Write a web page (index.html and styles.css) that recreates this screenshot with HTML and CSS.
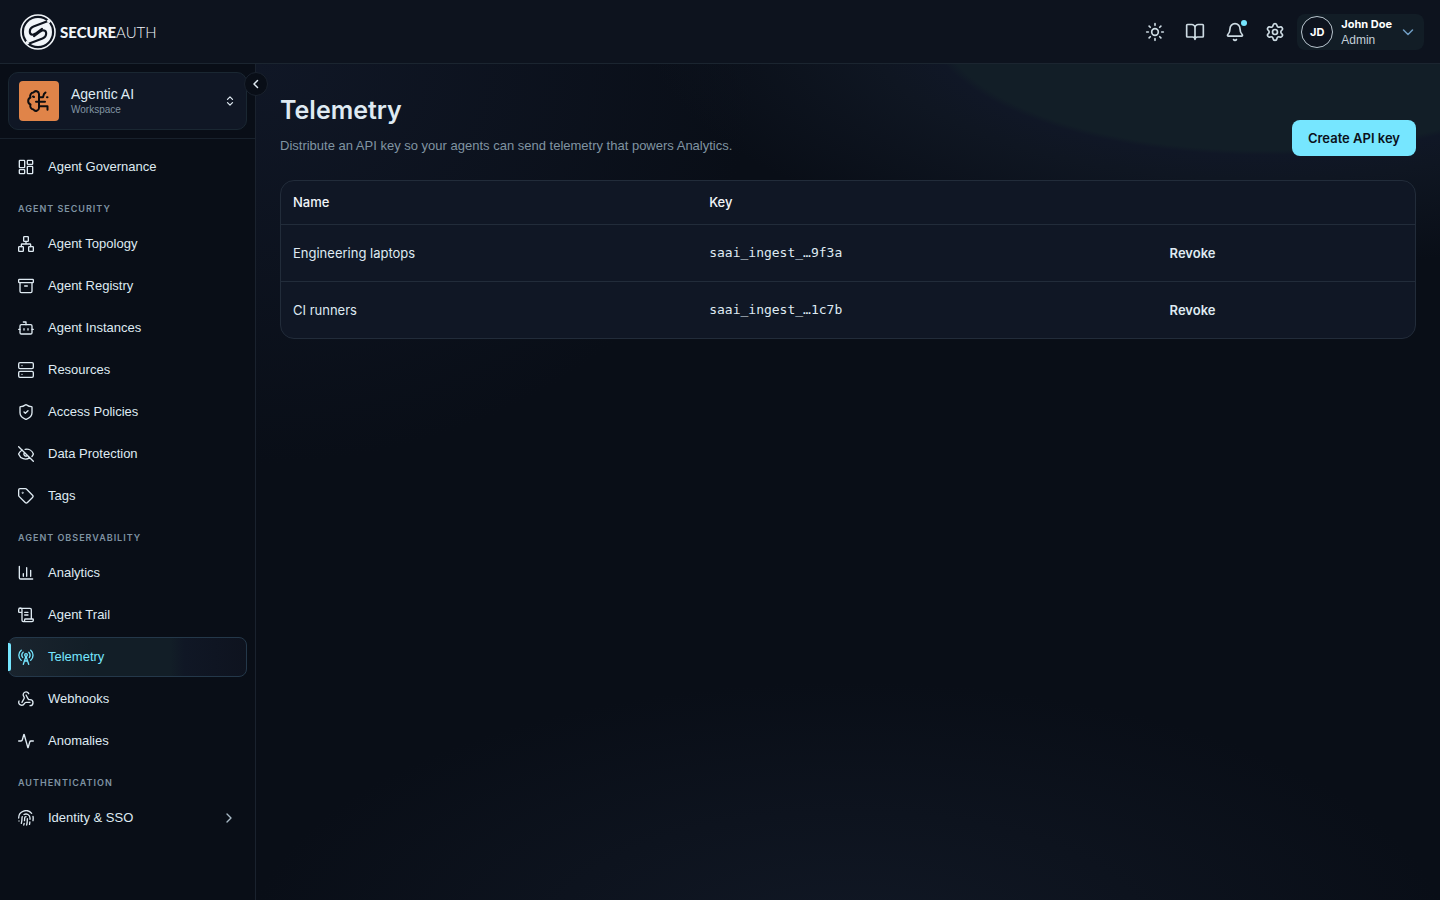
FILE: index.html
```html
<!DOCTYPE html>
<html lang="en">
<head>
<meta charset="utf-8">
<title>Telemetry - SecureAuth</title>
<link rel="stylesheet" href="styles.css">
</head>
<body>
<header class="topbar">
  <a class="brand" href="#">
    <svg class="brand-mark" viewBox="0 0 36 36" aria-hidden="true">
      <circle cx="18" cy="18" r="17" fill="none" stroke="#f1f5f9" stroke-width="1.6"/>
      <circle cx="18" cy="18" r="14" fill="#f1f5f9"/>
      <g fill="none" stroke="#0d131e" stroke-width="2.1" stroke-linecap="round" stroke-linejoin="round">
        <path d="M28 7 13.500 12.500C8.500 14.500 9 20.500 12.500 20.800c1.500 0 2.500-.800 3.500-1.500l6-4.500"/>
        <path d="M8 29l14.500-5.500C27.500 21.500 27 15.500 23.500 15.200c-1.500 0-2.500.800-3.500 1.500l-6 4.500" transform="translate(0 1)"/>
      </g>
      <path d="M27.500 6l2.500 2.500M6 27.500l2.500 2.500" stroke="#f1f5f9" stroke-width="2.500"/>
    </svg>
    <span class="brand-name"><b>SECURE</b>AUTH</span>
  </a>
  <div class="tools">
    <button class="tool" aria-label="Theme"><svg class="icon md" viewBox="0 0 24 24"><circle cx="12" cy="12" r="4"/><path d="M12 2v2M12 20v2M4.930 4.930l1.410 1.410M17.660 17.660l1.410 1.410M2 12h2M20 12h2M6.340 17.660l-1.410 1.410M19.070 4.930l-1.410 1.410"/></svg></button>
    <button class="tool" aria-label="Documentation"><svg class="icon md" viewBox="0 0 24 24"><path d="M12 7v14M3 18a1 1 0 0 1-1-1V4a1 1 0 0 1 1-1h5a4 4 0 0 1 4 4 4 4 0 0 1 4-4h5a1 1 0 0 1 1 1v13a1 1 0 0 1-1 1h-6a3 3 0 0 0-3 3 3 3 0 0 0-3-3z"/></svg></button>
    <button class="tool" aria-label="Notifications"><svg class="icon md" viewBox="0 0 24 24"><path d="M10.268 21a2 2 0 0 0 3.464 0M3.262 15.326A1 1 0 0 0 4 17h16a1 1 0 0 0 .740-1.673C19.410 13.956 18 12.499 18 8A6 6 0 0 0 6 8c0 4.499-1.411 5.956-2.738 7.326"/></svg><span class="dot"></span></button>
    <button class="tool" aria-label="Settings"><svg class="icon md" viewBox="0 0 24 24"><path d="M9.671 4.136a2.340 2.340 0 0 1 4.659 0 2.340 2.340 0 0 0 3.319 1.915 2.340 2.340 0 0 1 2.330 4.033 2.340 2.340 0 0 0 0 3.831 2.340 2.340 0 0 1-2.330 4.033 2.340 2.340 0 0 0-3.319 1.915 2.340 2.340 0 0 1-4.659 0 2.340 2.340 0 0 0-3.320-1.915 2.340 2.340 0 0 1-2.330-4.033 2.340 2.340 0 0 0 0-3.831A2.340 2.340 0 0 1 6.350 6.051a2.340 2.340 0 0 0 3.319-1.915"/><circle cx="12" cy="12" r="3"/></svg></button>
    <button class="user">
      <span class="avatar">JD</span>
      <span class="user-text"><b>John Doe</b><span>Admin</span></span>
      <svg class="icon sm user-chevron" viewBox="0 0 24 24"><path d="m3 8 9 9 9-9"/></svg>
    </button>
  </div>
</header>
<div class="shell">
  <aside class="sidebar">
    <button class="collapse" aria-label="Collapse sidebar"><svg class="icon sm" viewBox="0 0 24 24"><path d="m15 19-7-7 7-7"/></svg></button>
    <div class="workspace-wrap">
      <button class="workspace">
        <span class="workspace-tile"><svg class="brain" viewBox="0 0 24 24"><path d="M12 5a3 3 0 0 0-5.500-1.500A3.500 3.500 0 0 0 3.500 8.500a3.800 3.800 0 0 0 0 7A3.600 3.600 0 0 0 6.500 20.500 3 3 0 0 0 12 19zM12 8.300h4L17 5l1.500-1.500M20 8.300h.500M9 12.700h9M12 17.300h8.500v3.500M6 7.500l1 .5"/></svg></span>
        <span class="workspace-text"><span class="workspace-name">Agentic AI</span><span class="workspace-kind">Workspace</span></span>
        <svg class="icon xs" viewBox="0 0 24 24"><path d="m6 16 6 6 6-6M6 8l6-6 6 6"/></svg>
      </button>
    </div>
    <nav class="nav">
      <a class="item" href="#"><svg class="icon" viewBox="0 0 24 24"><rect width="8" height="11" x="2" y="2" rx="1"/><rect width="8" height="6" x="14" y="2" rx="1"/><rect width="8" height="11" x="14" y="11" rx="1"/><rect width="8" height="6" x="2" y="16" rx="1"/></svg>Agent Governance</a>
      <h2 class="group">Agent Security</h2>
      <a class="item" href="#"><svg class="icon" viewBox="0 0 24 24"><rect x="16" y="16" width="7" height="7" rx="1"/><rect x="1" y="16" width="7" height="7" rx="1"/><rect x="8.500" y="1" width="7" height="7" rx="1"/><path d="M5 16v-3a1 1 0 0 1 1-1h12a1 1 0 0 1 1 1v3M12 12V8"/></svg>Agent Topology</a>
      <a class="item" href="#"><svg class="icon" viewBox="0 0 24 24"><rect width="22" height="5" x="1" y="2" rx="1"/><path d="M3 7v13a2 2 0 0 0 2 2h14a2 2 0 0 0 2-2V7M10 12h4"/></svg>Agent Registry</a>
      <a class="item" href="#"><svg class="icon" viewBox="0 0 24 24"><path d="M12 7V3H8"/><rect width="18" height="14" x="3" y="7" rx="2"/><path d="M1 14h2M21 14h2M15 13v2M9 13v2"/></svg>Agent Instances</a>
      <a class="item" href="#"><svg class="icon" viewBox="0 0 24 24"><rect width="22" height="9" x="1" y="1" rx="2"/><rect width="22" height="9" x="1" y="14" rx="2"/><path d="M6 5.500h.010M6 18.500h.010"/></svg>Resources</a>
      <a class="item" href="#"><svg class="icon" viewBox="0 0 24 24"><path d="M21 13c0 5.500-3.800 8-8.660 9.950a1 1 0 0 1-.670-.010C6.800 21 3 18.500 3 13V5a1 1 0 0 1 1-1c2.500 0 5-1.200 7.240-2.720a1.170 1.170 0 0 1 1.520 0C15 2.800 17.500 4 20 4a1 1 0 0 1 1 1z"/><path d="m9 12 2 2 4-4"/></svg>Access Policies</a>
      <a class="item" href="#"><svg class="icon" viewBox="0 0 24 24"><path d="M10.733 5.076a10.744 10.744 0 0 1 12.205 6.575 1 1 0 0 1 0 .696 10.747 10.747 0 0 1-2 3.490M14.084 14.158a3 3 0 0 1-4.242-4.242M17.479 17.499a10.750 10.750 0 0 1-16.417-5.151 1 1 0 0 1 0-.696 10.750 10.750 0 0 1 5.446-5.643M1 1l22 22"/></svg>Data Protection</a>
      <a class="item" href="#"><svg class="icon" viewBox="0 0 24 24"><path d="M12.586 1.586A2 2 0 0 0 11.172 1H3a2 2 0 0 0-2 2v8.172a2 2 0 0 0 .586 1.414l9.204 9.204a2.426 2.426 0 0 0 3.420 0l7.580-7.580a2.426 2.426 0 0 0 0-3.420z"/><circle cx="7" cy="7" r=".5"/></svg>Tags</a>
      <h2 class="group">Agent Observability</h2>
      <a class="item" href="#"><svg class="icon" viewBox="0 0 24 24"><path d="M2 2v17a2 2 0 0 0 2 2h18M19 17V8M13 17V4M8 17v-4"/></svg>Analytics</a>
      <a class="item" href="#"><svg class="icon" viewBox="0 0 24 24"><path d="M15 12h-5M15 8h-5M20 17V4a2 2 0 0 0-2-2H3M8 22h13a2 2 0 0 0 2-2v-1a1 1 0 0 0-1-1H11a1 1 0 0 0-1 1v1a2 2 0 1 1-4 0V4a2 2 0 1 0-5 0v3a1 1 0 0 0 1 1h4"/></svg>Agent Trail</a>
      <a class="item active" href="#" aria-current="page"><svg class="icon" viewBox="0 0 24 24"><path d="M4.900 17.100C0 13 0 5.800 4.900 1.900M7.800 4.700a6.140 6.140 0 0 0-.800 8M16.200 4.800c2 2 2.260 5.500.800 8M19.100 1.900a10 10 0 0 1 0 15.100M9.500 18h5M8 23l4-12 4 12"/><circle cx="12" cy="9" r="2"/></svg>Telemetry</a>
      <a class="item" href="#"><svg class="icon" viewBox="0 0 24 24"><path d="M18 17h-6c-1.100 0-1.950.940-2.480 1.900A4.500 4.500 0 0 1 1 17c.010-.700.200-1.400.570-2"/><path d="m6 17 3.130-5.780c.530-.970.100-2.180-.500-3.100a4.300 4.300 0 1 1 7.500-4.060"/><path d="m12 6 3.130 5.730C15.660 12.700 16.900 13 18 13a4.500 4.500 0 0 1 0 9"/></svg>Webhooks</a>
      <a class="item" href="#"><svg class="icon" viewBox="0 0 24 24"><path d="M23 12h-3.480a2 2 0 0 0-1.930 1.460l-2.350 8.360a.250.250 0 0 1-.480 0L9.240 2.180a.250.250 0 0 0-.480 0l-2.350 8.360A2 2 0 0 1 4.490 12H1"/></svg>Anomalies</a>
      <h2 class="group">Authentication</h2>
      <a class="item" href="#"><svg class="icon" viewBox="0 0 24 24"><path d="M12 10a2 2 0 0 0-2 2c0 1.020-.100 2.510-.260 4M14 13.120c0 2.380 0 6.380-1 9.380M17.290 21.500c.120-.600.430-2.700.500-3.500M1 12a11 11 0 0 1 19.500-7M1.500 16.500h.010M22.500 16c.300-2 .300-5 0-6.500M5 20C5.500 18 6 15 6 12a6 6 0 0 1 .340-2M8.650 22.500c.210-.660.450-1.820.570-2.500M9 6.800a6 6 0 0 1 9 5.200v2"/></svg><span class="item-label">Identity &amp; SSO</span><svg class="icon more" viewBox="0 0 24 24"><path d="m9 18 6-6-6-6"/></svg></a>
    </nav>
  </aside>
  <main class="main">
    <div class="page-head">
      <div class="page-title">
        <h1>Telemetry</h1>
        <p>Distribute an API key so your agents can send telemetry that powers Analytics.</p>
      </div>
      <button class="primary">Create API key</button>
    </div>
    <div class="card">
      <table class="keys">
        <colgroup><col class="col-name"><col class="col-key"><col></colgroup>
        <thead><tr><th scope="col">Name</th><th scope="col">Key</th><td></td></tr></thead>
        <tbody>
          <tr><td>Engineering laptops</td><td class="mono">saai_ingest_…9f3a</td><td><button class="revoke">Revoke</button></td></tr>
          <tr><td>CI runners</td><td class="mono">saai_ingest_…1c7b</td><td><button class="revoke">Revoke</button></td></tr>
        </tbody>
      </table>
    </div>
  </main>
</div>
</body>
</html>
```
FILE: styles.css
```css
*, *::before, *::after { box-sizing: border-box; }
body {
  margin: 0;
  min-height: 100vh;
  display: flex;
  flex-direction: column;
  background: #090e17;
  color: #dfeaf2;
  font-family: Inter, "Liberation Sans", sans-serif;
  font-size: 13px;
  line-height: 20px;
}
button { font: inherit; color: inherit; background: none; border: 0; padding: 0; cursor: pointer; }
a { color: inherit; text-decoration: none; }
h1, h2, p { margin: 0; }
.icon {
  width: 16px;
  height: 16px;
  flex: none;
  fill: none;
  stroke: currentColor;
  stroke-width: 2;
  stroke-linecap: round;
  stroke-linejoin: round;
}
.icon.md { width: 20px; height: 20px; }
.icon.sm { width: 12px; height: 12px; stroke-width: 3; }
.icon.xs { width: 10px; height: 12px; stroke-width: 3; margin-right: 1px; }

.topbar {
  height: 64px;
  display: flex;
  align-items: center;
  justify-content: space-between;
  padding: 0 16px 0 20px;
  background: #0d131e;
  border-bottom: 1px solid #1b2530;
}
.brand { display: flex; align-items: center; gap: 4px; }
.brand-mark { width: 36px; height: 36px; }
.brand-name { font-family: Lato, sans-serif; font-size: 15px; font-weight: 300; color: #f1f5f9; }
.brand-name b { font-weight: 900; }
.tools { display: flex; align-items: center; }
.tool { position: relative; width: 40px; height: 40px; display: grid; place-items: center; color: #cddbe3; }
.dot {
  position: absolute;
  top: 8px;
  right: 8px;
  width: 6px;
  height: 6px;
  border-radius: 50%;
  background: #76e6ff;
}
.user {
  display: flex;
  align-items: center;
  gap: 8px;
  height: 36px;
  margin-left: 2px;
  padding: 0 10px 0 4px;
  border-radius: 8px;
  background: #121d26;
  text-align: left;
}
.avatar {
  width: 32px;
  height: 32px;
  display: grid;
  place-items: center;
  border: 1px solid #b9c6cf;
  border-radius: 50%;
  background: #0d131e;
  color: #fff;
  font-size: 11px;
  font-weight: 700;
}
.user-text {
  display: flex;
  flex-direction: column;
  font-family: "Liberation Sans", sans-serif;
  font-size: 12px;
  line-height: 16px;
  color: #c3d0d8;
}
.user-text b { font-family: Inter, sans-serif; font-size: 11px; font-weight: 700; color: #fff; }
.user-chevron { margin-left: 2px; color: #6f9cc2; }

.shell { flex: 1; display: flex; }
.sidebar {
  position: relative;
  width: 256px;
  flex: none;
  background: #090e17;
  border-right: 1px solid #1a222e;
}
.collapse {
  position: absolute;
  top: 8px;
  right: -13px;
  width: 24px;
  height: 24px;
  display: grid;
  place-items: center;
  border: 1px solid #1a222e;
  border-radius: 50%;
  background: #090e17;
}
.workspace-wrap { padding: 8px; border-bottom: 1px solid #18212c; }
.workspace {
  width: 100%;
  height: 58px;
  display: flex;
  align-items: center;
  gap: 12px;
  padding: 0 10px;
  border: 1px solid #1a2732;
  border-radius: 10px;
  background: #101725;
  text-align: left;
}
.workspace-tile {
  width: 40px;
  height: 40px;
  display: grid;
  place-items: center;
  border-radius: 4px;
  background: #e08449;
}
.brain { width: 24px; height: 24px; fill: none; stroke: #0d0d10; stroke-width: 2; stroke-linecap: round; stroke-linejoin: round; }
.workspace-text { flex: 1; display: flex; flex-direction: column; font-family: "Liberation Sans", sans-serif; }
.workspace-name { font-size: 14px; line-height: 18px; }
.workspace-kind { font-size: 10px; line-height: 14px; color: #8295a3; }
.nav { display: flex; flex-direction: column; gap: 2px; padding: 8px; }
.item {
  height: 40px;
  display: flex;
  align-items: center;
  gap: 14px;
  padding: 0 9px;
  border: 1px solid transparent;
  border-radius: 8px;
  font-family: "Liberation Sans", sans-serif;
}
.item-label { flex: 1; }
.more { color: #a9bac6; }
.active {
  position: relative;
  color: #76e6ff;
  border-color: #24384a;
  background: linear-gradient(90deg, #1a242e, #121e27 35%, #121e27 68%, #101725 74%, #0e131f);
}
.active::before {
  content: "";
  position: absolute;
  left: -1px;
  top: 5px;
  bottom: 5px;
  width: 3px;
  border-radius: 0 2px 2px 0;
  background: #76e6ff;
}
.group {
  padding: 13px 10px 7px;
  font-size: 9px;
  line-height: 13px;
  font-weight: 600;
  letter-spacing: 1px;
  text-transform: uppercase;
  color: #7f93a3;
}

.main {
  flex: 1;
  min-width: 0;
  padding: 24px;
  background:
    radial-gradient(ellipse 620px 246px at 85% -5%, #121e27 52%, #101726 54%, #0f1622 64%, transparent),
    radial-gradient(ellipse 500px 400px at 0 0, #101726, transparent),
    radial-gradient(ellipse 600px 260px at 50% 105%, #111825, transparent),
    #090e17;
}
.page-head { display: flex; align-items: flex-end; justify-content: space-between; gap: 24px; margin-bottom: 24px; }
.page-title { display: flex; flex-direction: column; gap: 4px; }
.page-title h1 { font-size: 25px; line-height: 44px; font-weight: 600; }
.page-title p { font-family: "Liberation Sans", sans-serif; color: #8094a2; }
.primary {
  height: 36px;
  padding: 0 16px;
  border-radius: 8px;
  background: #76e6ff;
  color: #0b111b;
  font-weight: 600;
}
.card { overflow: hidden; border: 1px solid #222c3a; border-radius: 14px; background: #101725; }
.keys { width: 100%; border-collapse: collapse; table-layout: fixed; text-align: left; }
.col-name { width: 36.7%; }
.col-key { width: 40.6%; }
.keys th, .keys td { height: 57px; padding: 0 12px; }
.keys thead th, .keys thead td { height: 43px; font-weight: 500; color: #f1f5f9; }
.keys tbody tr { border-top: 1px solid #222c3a; }
.keys .mono { font-family: "DejaVu Sans Mono", monospace; }
.revoke { font-weight: 600; color: #dfeaf2; }
```
